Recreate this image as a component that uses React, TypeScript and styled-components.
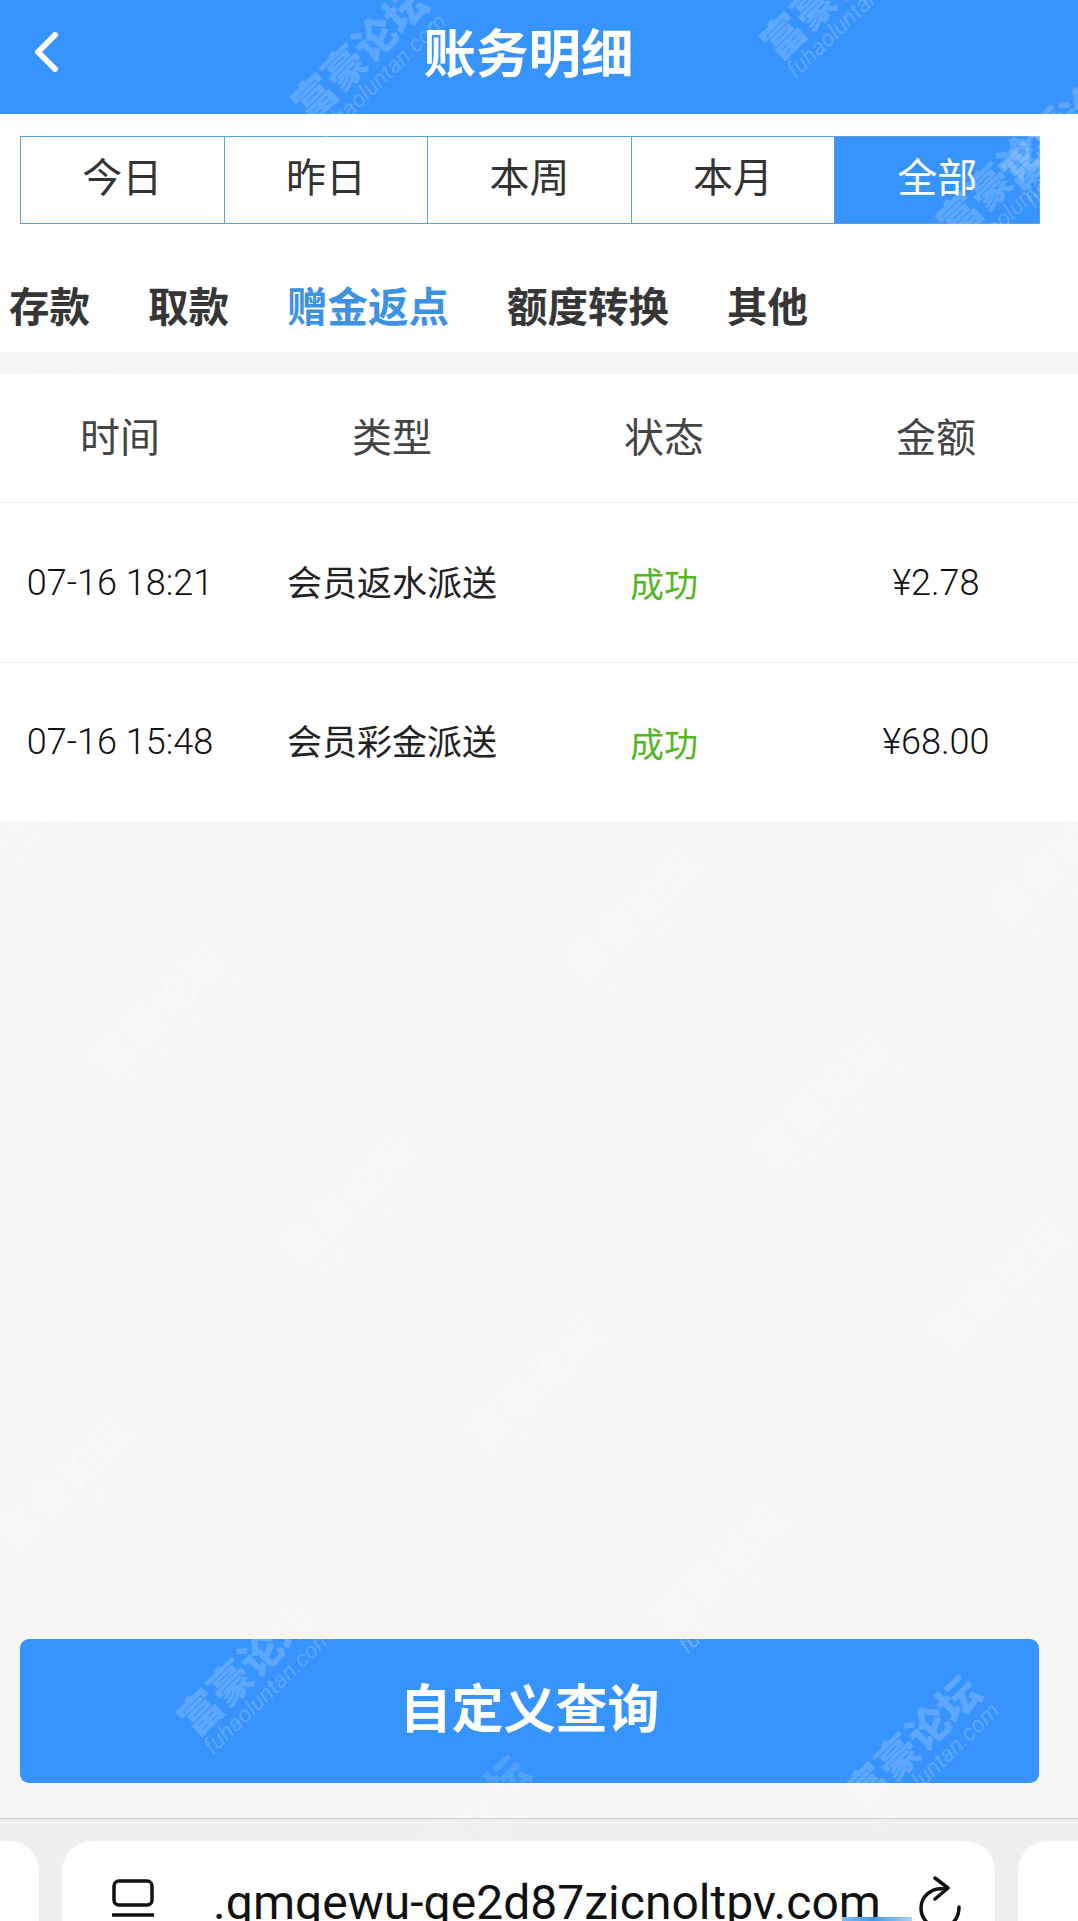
import React from "react";
import styled, { createGlobalStyle } from "styled-components";

const BLUE = "#3793ff";
const CJK = `"Noto Sans CJK SC", "Noto Sans", sans-serif`;

const GlobalStyle = createGlobalStyle`
  html, body {
    margin: 0;
    padding: 0;
    background: #ffffff;
  }
  * {
    box-sizing: border-box;
  }
`;

const Page = styled.div`
  position: relative;
  display: flex;
  flex-direction: column;
  width: 1078px;
  height: 1921px;
  overflow: hidden;
  background: #ffffff;
  font-family: ${CJK};
`;

const Header = styled.header`
  position: relative;
  display: flex;
  align-items: center;
  flex-shrink: 0;
  height: 114px;
  padding-left: 33px;
  background: ${BLUE};
`;

const BackButton = styled.svg`
  flex-shrink: 0;
  width: 26px;
  height: 40px;
  margin-top: -11px;
`;

const Title = styled.h1`
  flex: 1;
  margin: -14px 80px 0 0;
  padding: 0;
  text-align: center;
  font-size: 52.5px;
  line-height: 60px;
  font-weight: 700;
  color: #ffffff;
`;

const PeriodTabs = styled.div`
  display: grid;
  grid-template-columns: repeat(5, 1fr);
  flex-shrink: 0;
  height: 88px;
  margin: 22px 38px 0 20px;
  border: 1px solid #5e9fdf;
`;

const PeriodTab = styled.div<{ $active?: boolean }>`
  display: flex;
  align-items: center;
  justify-content: center;
  padding-bottom: 11px;
  font-size: 40px;
  color: ${({ $active }) => ($active ? "#ffffff" : "#333333")};
  background: ${({ $active }) => ($active ? BLUE : "#ffffff")};
  border-right: 1px solid #5e9fdf;

  &:last-child {
    border-right: 0;
  }
`;

const Categories = styled.nav`
  display: flex;
  flex-shrink: 0;
  gap: 58px;
  height: 128px;
  padding: 56px 0 22px 9px;
`;

const Category = styled.span<{ $active?: boolean }>`
  font-size: 40.5px;
  line-height: 50px;
  font-weight: 700;
  color: ${({ $active }) => ($active ? "#3d92e4" : "#363636")};
`;

const Strip = styled.div`
  flex-shrink: 0;
  height: 22px;
  background: #f5f5f6;
`;

const Table = styled.section`
  flex-shrink: 0;
  background: #ffffff;
`;

const TableRow = styled.div<{ $height: number; $divider?: boolean }>`
  height: ${({ $height }) => $height}px;
  border-bottom: ${({ $divider }) => ($divider ? "1px solid #f1f1f1" : "0")};
`;

const RowCells = styled.div`
  display: grid;
  grid-template-columns: repeat(4, 272px);
  align-items: center;
  height: 100%;
  margin-left: -16px;
`;

const HeadCell = styled.div`
  margin-top: -6px;
  text-align: center;
  font-size: 40px;
  color: #444444;
`;

const NumberCell = styled.div`
  text-align: center;
  font-family: Roboto, ${CJK};
  font-size: 36px;
  font-weight: 300;
  color: #111111;
`;

const TypeCell = styled.div`
  margin-top: -5px;
  text-align: center;
  font-size: 35px;
  color: #222222;
`;

const StatusCell = styled.div`
  text-align: center;
  font-size: 34px;
  color: #55b622;
`;

const Content = styled.main`
  display: flex;
  flex: 1;
  flex-direction: column;
  justify-content: flex-end;
  padding: 0 39px 35px 20px;
  background: #f6f6f7;
`;

const QueryButton = styled.button`
  height: 144px;
  padding: 0 0 11px;
  border: 0;
  border-radius: 9px;
  font-family: ${CJK};
  font-size: 52px;
  font-weight: 700;
  color: #ffffff;
  background: ${BLUE};
`;

const BrowserBar = styled.footer`
  display: grid;
  grid-template-columns: 39px 933px 1fr;
  column-gap: 23px;
  flex-shrink: 0;
  height: 103px;
  padding-top: 22px;
  overflow: hidden;
  background: #efefef;
  border-top: 1px solid #cdcdcd;
`;

const SideCard = styled.div<{ $side: "left" | "right" }>`
  height: 120px;
  background: #ffffff;
  border-radius: ${({ $side }) =>
    $side === "left" ? "0 30px 0 0" : "30px 0 0 0"};
`;

const AddressCard = styled.div`
  display: flex;
  align-items: flex-start;
  height: 120px;
  padding: 38px 0 0 50px;
  background: #ffffff;
  border-radius: 30px 30px 0 0;
`;

const TabsIcon = styled.svg`
  flex-shrink: 0;
  width: 42px;
  height: 42px;
`;

const Url = styled.div`
  flex-shrink: 0;
  width: 664px;
  margin: -11px 0 0 59px;
  font-family: Roboto, sans-serif;
  font-size: 48px;
  line-height: 70px;
  white-space: nowrap;
  color: #111111;
`;

const ReloadIcon = styled.svg`
  flex-shrink: 0;
  width: 44px;
  height: 50px;
  margin: -3px 0 0 40px;
`;

const WatermarkLayer = styled.div`
  position: absolute;
  inset: 0;
  pointer-events: none;
`;

const Watermark = styled.div<{ $x: number; $y: number; $alpha: number }>`
  position: absolute;
  left: ${({ $x }) => $x}px;
  top: ${({ $y }) => $y}px;
  display: flex;
  flex-direction: column;
  align-items: center;
  width: 200px;
  transform: translate(-50%, -50%) rotate(-44deg);
  color: rgba(255, 255, 255, ${({ $alpha }) => $alpha});
`;

const MarkName = styled.div`
  font-size: 42px;
  line-height: 44px;
  font-weight: 900;
  white-space: nowrap;
`;

const MarkSite = styled.div`
  font-family: Roboto, sans-serif;
  font-size: 23px;
  line-height: 26px;
  font-style: italic;
  white-space: nowrap;
`;

const Smudge = styled.div`
  position: absolute;
  left: 842px;
  bottom: 0;
  width: 70px;
  height: 4px;
  background: linear-gradient(90deg, #7fbdf2, #3f9be8 45%, #a9d4f5);
`;

const periods = [
  { label: "今日" },
  { label: "昨日" },
  { label: "本周" },
  { label: "本月" },
  { label: "全部", active: true },
];

const categories = [
  { label: "存款" },
  { label: "取款" },
  { label: "赠金返点", active: true },
  { label: "额度转换" },
  { label: "其他" },
];

const records = [
  { time: "07-16 18:21", type: "会员返水派送", status: "成功", amount: "¥2.78" },
  { time: "07-16 15:48", type: "会员彩金派送", status: "成功", amount: "¥68.00" },
];

const marks = [
  { x: 367, y: 61, a: 0.2 },
  { x: 836, y: 0, a: 0.2 },
  { x: 1012, y: 180, a: 0.2 },
  { x: 1075, y: 130, a: 0.2 },
  { x: 83, y: 368, a: 0.25 },
  { x: 10, y: 835, a: 0.25 },
  { x: 165, y: 1019, a: 0.25 },
  { x: 641, y: 922, a: 0.25 },
  { x: 828, y: 1108, a: 0.25 },
  { x: 355, y: 1208, a: 0.25 },
  { x: 1007, y: 1292, a: 0.25 },
  { x: 541, y: 1391, a: 0.25 },
  { x: 72, y: 1491, a: 0.25 },
  { x: 728, y: 1575, a: 0.25 },
  { x: 1065, y: 866, a: 0.25 },
  { x: 253, y: 1676, a: 0.2 },
  { x: 920, y: 1750, a: 0.2 },
  { x: 469, y: 1830, a: 0.15 },
];

const App: React.FC = () => (
  <Page>
    <GlobalStyle />
    <Header>
      <BackButton viewBox="0 0 26 40">
        <polyline
          points="22,3 5,20 22,37"
          fill="none"
          stroke="#ffffff"
          strokeWidth="6"
          strokeLinecap="round"
          strokeLinejoin="round"
        />
      </BackButton>
      <Title>账务明细</Title>
    </Header>

    <PeriodTabs>
      {periods.map(({ label, active }) => (
        <PeriodTab key={label} $active={active}>
          {label}
        </PeriodTab>
      ))}
    </PeriodTabs>

    <Categories>
      {categories.map(({ label, active }) => (
        <Category key={label} $active={active}>
          {label}
        </Category>
      ))}
    </Categories>

    <Strip />

    <Table>
      <TableRow $height={129} $divider>
        <RowCells>
          <HeadCell>时间</HeadCell>
          <HeadCell>类型</HeadCell>
          <HeadCell>状态</HeadCell>
          <HeadCell>金额</HeadCell>
        </RowCells>
      </TableRow>
      {records.map((record, index) => (
        <TableRow
          key={record.time}
          $height={index === 0 ? 160 : 158}
          $divider={index === 0}
        >
          <RowCells>
            <NumberCell>{record.time}</NumberCell>
            <TypeCell>{record.type}</TypeCell>
            <StatusCell>{record.status}</StatusCell>
            <NumberCell>{record.amount}</NumberCell>
          </RowCells>
        </TableRow>
      ))}
    </Table>

    <Content>
      <QueryButton>自定义查询</QueryButton>
    </Content>

    <BrowserBar>
      <SideCard $side="left" />
      <AddressCard>
        <TabsIcon viewBox="0 0 42 42">
          <rect
            x="2"
            y="2"
            width="38"
            height="24"
            rx="5"
            fill="none"
            stroke="#111111"
            strokeWidth="3.5"
          />
          <line
            x1="1"
            y1="36"
            x2="41"
            y2="36"
            stroke="#111111"
            strokeWidth="3.5"
            strokeLinecap="round"
          />
        </TabsIcon>
        <Url>.qmqewu-qe2d87zicnoltpv.com</Url>
        <ReloadIcon viewBox="0 0 44 50">
          <path
            d="M28 13 C 14 11, 4 21, 4 32 C 4 43, 13 52, 23 52 C 33 52, 42 44, 42 31"
            fill="none"
            stroke="#111111"
            strokeWidth="3.5"
            strokeLinecap="round"
          />
          <polyline
            points="18,2 31,12 18,23"
            fill="none"
            stroke="#111111"
            strokeWidth="3.5"
            strokeLinecap="round"
            strokeLinejoin="round"
          />
        </ReloadIcon>
      </AddressCard>
      <SideCard $side="right" />
    </BrowserBar>

    <WatermarkLayer>
      {marks.map(({ x, y, a }) => (
        <Watermark key={`${x}-${y}`} $x={x} $y={y} $alpha={a}>
          <MarkName>富豪论坛</MarkName>
          <MarkSite>fuhaoluntan.com</MarkSite>
        </Watermark>
      ))}
      <Smudge />
    </WatermarkLayer>
  </Page>
);

export default App;
